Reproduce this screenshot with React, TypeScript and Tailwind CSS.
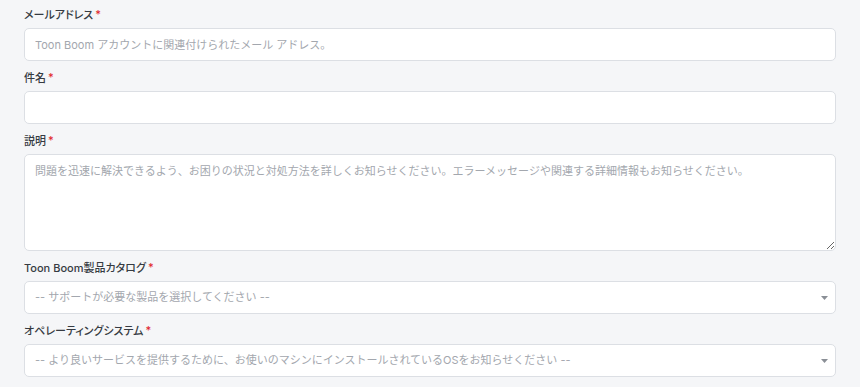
const fontStack = { fontFamily: 'Inter, "Noto Sans CJK JP", sans-serif' };

function Label({ text }: { text: string }) {
  return (
    <label className="block h-[18px] mb-[4px] text-[11px] leading-[18px] font-medium text-[#363b42] [font-feature-settings:'palt']">
      {text}
      <span className="ml-[2px] text-[#e0242b] align-top text-[11px] leading-[16px]">*</span>
    </label>
  );
}

function SelectBox({ placeholder }: { placeholder: string }) {
  return (
    <div className="relative">
      <select
        defaultValue=""
        className="w-full h-[33px] appearance-none rounded-[5px] border border-[#dcdfe4] bg-white pl-[10px] pr-[28px] text-[11px] text-[#a3a7ae] outline-none"
      >
        <option value="">{placeholder}</option>
      </select>
      {/* arrow */}
      <svg className="absolute right-[8px] top-[15px] pointer-events-none" width="7" height="4" viewBox="0 0 7 4">
        <path d="M0 0h7L3.5 4z" fill="#8a8f96" />
      </svg>
    </div>
  );
}

export default function App() {
  return (
    <div className="min-h-[387px] bg-[#f5f6f8] px-[24px] pt-[6px]" style={fontStack}>
      {/* email */}
      <div className="mb-[8px]">
        <Label text="メールアドレス" />
        <input
          className="w-full h-[33px] rounded-[5px] border border-[#dcdfe4] bg-white px-[10px] text-[11px] text-[#333] placeholder:text-[#a3a7ae] outline-none"
          placeholder="Toon Boom アカウントに関連付けられたメール アドレス。"
        />
      </div>

      {/* subject */}
      <div className="mb-[8px]">
        <Label text="件名" />
        <input className="w-full h-[33px] rounded-[5px] border border-[#dcdfe4] bg-white px-[10px] text-[11px] outline-none" />
      </div>

      {/* description */}
      <div className="mb-[8px]">
        <Label text="説明" />
        <textarea
          className="block w-full h-[97px] rounded-[5px] border border-[#dcdfe4] bg-white px-[10px] pt-[8px] text-[11px] leading-[16px] placeholder:text-[#a3a7ae] outline-none"
          placeholder="問題を迅速に解決できるよう、お困りの状況と対処方法を詳しくお知らせください。エラーメッセージや関連する詳細情報もお知らせください。"
        />
      </div>

      {/* product */}
      <div className="mb-[8px]">
        <Label text="Toon Boom製品カタログ" />
        <SelectBox placeholder="-- サポートが必要な製品を選択してください --" />
      </div>

      {/* os */}
      <div>
        <Label text="オペレーティングシステム" />
        <SelectBox placeholder="-- より良いサービスを提供するために、お使いのマシンにインストールされているOSをお知らせください --" />
      </div>
    </div>
  );
}
